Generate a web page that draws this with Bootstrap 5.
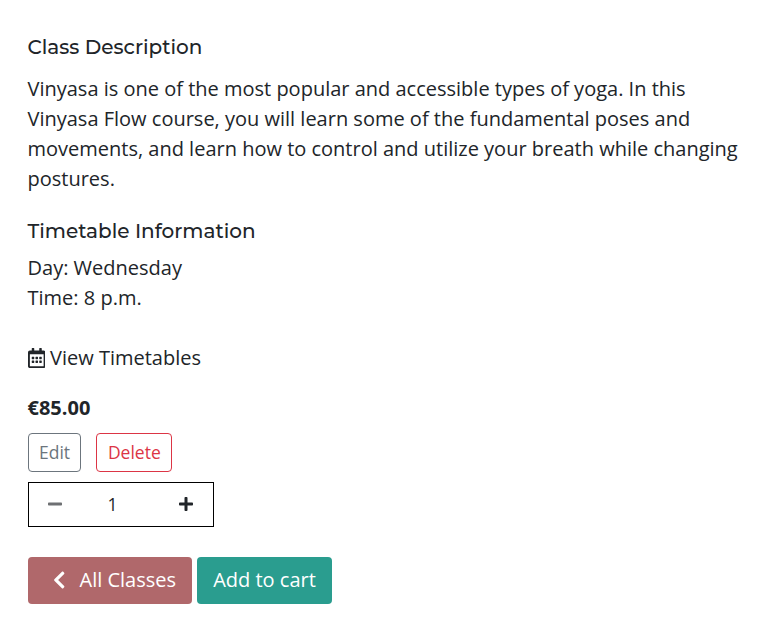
<!DOCTYPE html>
<html lang="en">
<head>
<meta charset="utf-8">
<meta name="viewport" content="width=device-width, initial-scale=1">
<title>Class Description</title>
<link href="https://cdn.jsdelivr.net/npm/bootstrap@5.3.0/dist/css/bootstrap.min.css" rel="stylesheet">
<style>
body{font-family:"Open Sans",sans-serif;font-size:20px;line-height:30px;color:#212529;overflow:hidden}
.page{padding:32px 27.5px 0}
.sec-title{font-family:Montserrat,Inter,sans-serif;font-size:20px;font-weight:500;line-height:30px}
.desc{width:720px;margin-bottom:22px}
.info{margin:7px 0 30px}
.view-link{gap:5px}
.price{margin:20px 0 10px}
.actions{gap:15px}
.small-btn{font-size:17.5px;line-height:27px;height:39px;padding:5px 10px 5px 10.5px;border-radius:4px}
.delete-btn{width:76px}
.qty{width:186px;height:45px;border:1px solid #000;margin:10px 0 30px}
.qty-btn{width:52px;padding:0 0 1px;color:#212529}
.qty-plus{padding-right:1px}
.qty-num{font-size:17.5px;padding:0 16px 2px 0}
.buttons{gap:5px}
.big-btn{font-size:20px;line-height:30px;height:47px;padding-bottom:1px;border-radius:4px;color:#fff;border:0}
.big-btn:hover{color:#fff}
.btn-rose,.btn-rose:hover{width:164.5px;padding-left:25px;background:#b0686b}
.btn-teal,.btn-teal:hover{width:135px;background:#2a9d8f}
.back-label{padding-left:14.5px}
svg{fill:currentColor}
</style>
</head>
<body>
<main class="page">
<h2 class="sec-title mb-0">Class Description</h2>
<p class="desc pt-1 mt-2">Vinyasa is one of the most popular and accessible types of yoga. In this<br>Vinyasa Flow course, you will learn some of the fundamental poses and<br>movements, and learn how to control and utilize your breath while changing<br>postures.</p>
<h2 class="sec-title mb-0">Timetable Information</h2>
<p class="info">Day: Wednesday<br>Time: 8 p.m.</p>
<a href="#" class="view-link d-flex align-items-center text-reset text-decoration-none">
<svg width="17.5" height="20" viewBox="0 0 448 512"><path d="M148 288h-40c-6.600 0-12-5.400-12-12v-40c0-6.600 5.400-12 12-12h40c6.600 0 12 5.400 12 12v40c0 6.600-5.400 12-12 12zm108-12v-40c0-6.600-5.400-12-12-12h-40c-6.600 0-12 5.400-12 12v40c0 6.600 5.400 12 12 12h40c6.600 0 12-5.400 12-12zm96 0v-40c0-6.600-5.400-12-12-12h-40c-6.600 0-12 5.400-12 12v40c0 6.600 5.400 12 12 12h40c6.600 0 12-5.400 12-12zm-96 96v-40c0-6.600-5.400-12-12-12h-40c-6.600 0-12 5.400-12 12v40c0 6.600 5.400 12 12 12h40c6.600 0 12-5.400 12-12zm-96 0v-40c0-6.600-5.400-12-12-12h-40c-6.600 0-12 5.400-12 12v40c0 6.600 5.400 12 12 12h40c6.600 0 12-5.400 12-12zm192 0v-40c0-6.600-5.400-12-12-12h-40c-6.600 0-12 5.400-12 12v40c0 6.600 5.400 12 12 12h40c6.600 0 12-5.400 12-12zm96-260v352c0 26.500-21.500 48-48 48H48c-26.500 0-48-21.500-48-48V112c0-26.500 21.500-48 48-48h48V12c0-6.600 5.400-12 12-12h40c6.600 0 12 5.400 12 12v52h128V12c0-6.600 5.400-12 12-12h40c6.600 0 12 5.400 12 12v52h48c26.500 0 48 21.500 48 48zm-48 346V160H48v298c0 3.300 2.700 6 6 6h340c3.300 0 6-2.700 6-6z"/></svg>
<span>View Timetables</span></a>
<p class="price fw-bold">€85.00</p>
<div class="actions d-flex">
<button class="btn btn-outline-secondary small-btn">Edit</button>
<button class="btn btn-outline-danger small-btn delete-btn">Delete</button>
</div>
<div class="qty d-flex align-items-center">
<button class="btn border-0 qty-btn d-flex justify-content-center" disabled aria-label="Decrease"><svg width="14" height="16" viewBox="0 0 448 512"><path d="M416 208H32c-17.670 0-32 14.330-32 32v32c0 17.670 14.330 32 32 32h384c17.670 0 32-14.330 32-32v-32c0-17.670-14.330-32-32-32z"/></svg></button>
<span class="qty-num flex-fill text-center">1</span>
<button class="btn border-0 qty-btn qty-plus d-flex justify-content-center" aria-label="Increase"><svg width="14" height="16" viewBox="0 0 448 512"><path d="M416 208H272V64c0-17.670-14.330-32-32-32h-32c-17.670 0-32 14.330-32 32v144H32c-17.670 0-32 14.330-32 32v32c0 17.670 14.330 32 32 32h144v144c0 17.670 14.330 32 32 32h32c17.670 0 32-14.330 32-32V304h144c17.670 0 32-14.330 32-32v-32c0-17.670-14.330-32-32-32z"/></svg></button>
</div>
<div class="buttons d-flex">
<a href="#" class="btn big-btn btn-rose d-flex align-items-center pt-0 pe-0"><svg width="12.5" height="20" viewBox="0 0 320 512"><path d="M34.520 239.030L228.870 44.690c9.370-9.370 24.570-9.370 33.940 0l22.670 22.670c9.360 9.360 9.370 24.520.040 33.900L131.490 256l154.020 154.750c9.340 9.380 9.320 24.540-.040 33.900l-22.670 22.670c-9.370 9.370-24.570 9.370-33.940 0L34.520 272.970c-9.370-9.370-9.370-24.570 0-33.940z"/></svg><span class="back-label">All Classes</span></a>
<button class="btn big-btn btn-teal px-0 pt-0">Add to cart</button>
</div>
</main>
<script src="https://cdn.jsdelivr.net/npm/bootstrap@5.3.0/dist/js/bootstrap.bundle.min.js"></script>
</body>
</html>
